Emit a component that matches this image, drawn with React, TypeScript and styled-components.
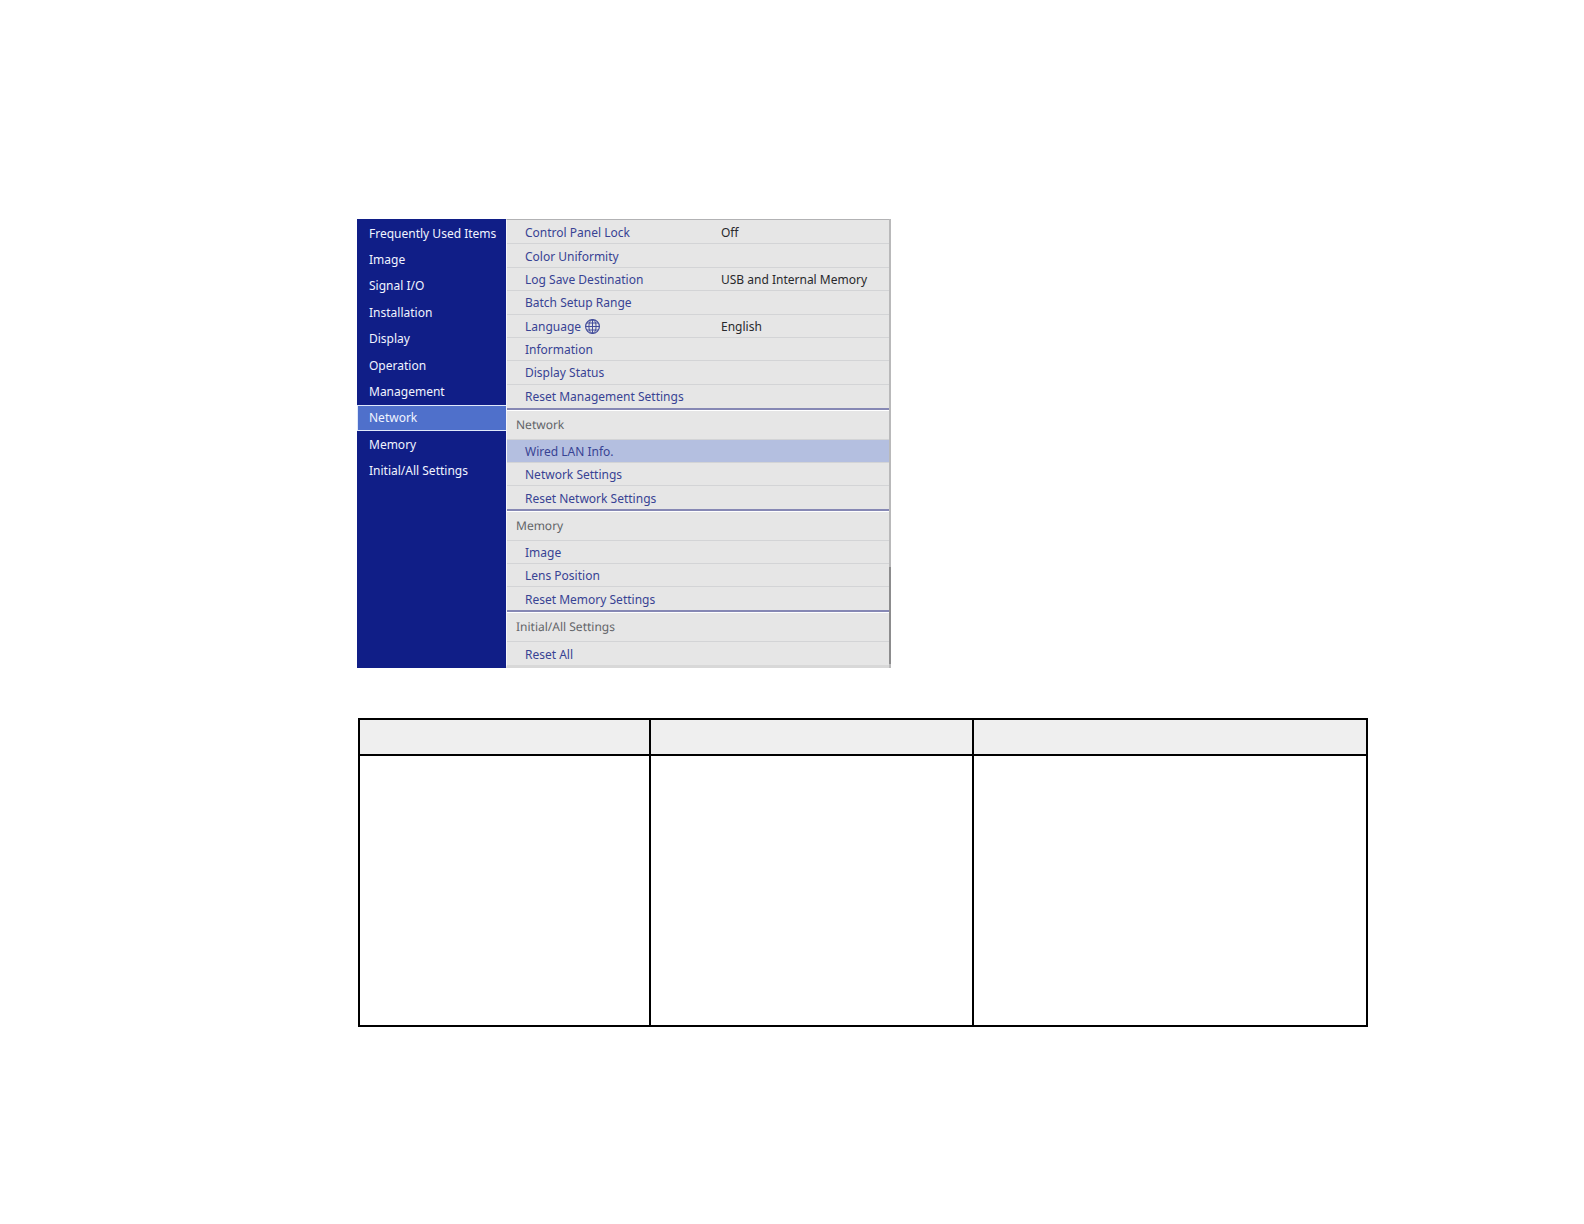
import React, { useState } from 'react';
import styled, { createGlobalStyle } from 'styled-components';

const GlobalStyle = createGlobalStyle`
  * { box-sizing: border-box; }
  body {
    margin: 0;
    background: #ffffff;
    font-family: "Noto Sans", "Open Sans", sans-serif;
    text-rendering: geometricPrecision;
  }
`;

const Page = styled.main`
  display: flex;
  flex-direction: column;
  gap: 50px;
  padding: 219px 216px 197px 357px;
`;

const Menu = styled.section`
  display: grid;
  grid-template-columns: 149px minmax(0, 1fr) 2px;
  width: 100%;
  max-width: 534px;
`;

const Sidebar = styled.nav`
  padding-top: 1px;
  background: #101e87;
`;

const SidebarList = styled.div`
  display: grid;
  grid-auto-rows: 1fr;
  height: 264px;
`;

const SidebarItem = styled.button<{ $active: boolean }>`
  display: flex;
  align-items: center;
  padding: 1px 11px 0;
  border: 1px solid ${(p) => (p.$active ? '#dfe8fb' : 'transparent')};
  background: ${(p) => (p.$active ? '#4f70cb' : 'transparent')};
  color: #f1f4ff;
  font: inherit;
  font-size: 12px;
  line-height: 16px;
  text-align: left;
  white-space: nowrap;
`;

const Settings = styled.div`
  border-top: 1px solid #b2b2b4;
  border-bottom: 3px solid #d8d8d8;
  border-left: 1px solid #f6f6fa;
  background: #e6e6e6;
`;

const Group = styled.section``;

const GroupTitle = styled.h2`
  display: flex;
  align-items: center;
  height: 30px;
  margin: 0;
  padding: 1px 9px 0;
  border-bottom: 1px solid #d3d4d6;
  box-shadow: inset 0 1px #ffffff;
  color: #626468;
  font-size: 12px;
  font-weight: 400;
  line-height: 16px;
`;

const Rows = styled.div<{ $height: number; $first: boolean; $ruled: boolean }>`
  display: grid;
  grid-auto-rows: 1fr;
  height: ${(p) => p.$height}px;
  padding-top: ${(p) => (p.$first ? 1 : 0)}px;
  border-bottom: ${(p) => (p.$ruled ? '2px solid #8688b4' : '0')};
`;

const Row = styled.button<{ $selected: boolean }>`
  display: grid;
  grid-template-columns: 196px 1fr;
  align-items: center;
  padding: 2px 0 0 18px;
  border: 0;
  border-bottom: 1px solid #d3d4d6;
  background: ${(p) => (p.$selected ? '#b4bfe0' : 'transparent')};
  font: inherit;
  font-size: 12px;
  line-height: 16px;
  text-align: left;
  white-space: nowrap;

  &:last-child { border-bottom: 0; }
`;

const Label = styled.span`
  display: flex;
  align-items: center;
  gap: 4px;
  color: #384394;
`;

const Value = styled.span`
  color: #29292c;
`;

const ScrollTrack = styled.div`
  padding-top: 348px;
  background: #b9b9ba;
`;

const ScrollThumb = styled.div`
  height: 97px;
  background: #8c8c8d;
`;

const Table = styled.table`
  width: calc(100% - 1px);
  margin-left: 1px;
  border-collapse: collapse;
  table-layout: fixed;
`;

const Column = styled.col<{ $width: string }>`
  width: ${(p) => p.$width};
`;

const Cell = styled.td<{ $head?: boolean }>`
  height: ${(p) => (p.$head ? 36 : 271)}px;
  padding: 0;
  border: 2px solid #000000;
  background: ${(p) => (p.$head ? '#efefef' : '#ffffff')};
`;

function Globe() {
  return (
    <svg width="15" height="15" viewBox="0 0 15 15" fill="none" stroke="#434d9b" strokeWidth="1" aria-hidden="true">
      <circle cx="7.5" cy="7.5" r="6.9" strokeWidth="1.2" />
      <ellipse cx="7.5" cy="7.5" rx="3.6" ry="6.9" />
      <path d="M7.5 0.6V14.4M0.6 7.5H14.4M1.6 4H13.4M1.6 11H13.4" />
    </svg>
  );
}

type Item = { label: string; value?: string; globe?: boolean };
type ItemGroup = { title?: string; height: number; items: Item[] };

const pages = [
  'Frequently Used Items', 'Image', 'Signal I/O', 'Installation', 'Display',
  'Operation', 'Management', 'Network', 'Memory', 'Initial/All Settings',
];

const groups: ItemGroup[] = [
  {
    height: 190,
    items: [
      { label: 'Control Panel Lock', value: 'Off' },
      { label: 'Color Uniformity' },
      { label: 'Log Save Destination', value: 'USB and Internal Memory' },
      { label: 'Batch Setup Range' },
      { label: 'Language', value: 'English', globe: true },
      { label: 'Information' },
      { label: 'Display Status' },
      { label: 'Reset Management Settings' },
    ],
  },
  {
    title: 'Network',
    height: 71,
    items: [{ label: 'Wired LAN Info.' }, { label: 'Network Settings' }, { label: 'Reset Network Settings' }],
  },
  {
    title: 'Memory',
    height: 71,
    items: [{ label: 'Image' }, { label: 'Lens Position' }, { label: 'Reset Memory Settings' }],
  },
  { title: 'Initial/All Settings', height: 23, items: [{ label: 'Reset All' }] },
];

export default function App() {
  const [page, setPage] = useState('Network');
  const [selected, setSelected] = useState('Wired LAN Info.');

  return (
    <>
      <GlobalStyle />
      <Page>
        <Menu>
          <Sidebar>
            <SidebarList>
              {pages.map((name) => (
                <SidebarItem key={name} type="button" $active={name === page} onClick={() => setPage(name)}>
                  {name}
                </SidebarItem>
              ))}
            </SidebarList>
          </Sidebar>
          <Settings>
            {groups.map((group, i) => (
              <Group key={i}>
                {group.title && <GroupTitle>{group.title}</GroupTitle>}
                <Rows $height={group.height} $first={i === 0} $ruled={i < groups.length - 1}>
                  {group.items.map((item) => (
                    <Row
                      key={item.label}
                      type="button"
                      $selected={item.label === selected}
                      onClick={() => setSelected(item.label)}
                    >
                      <Label>
                        {item.label}
                        {item.globe && <Globe />}
                      </Label>
                      {item.value && <Value>{item.value}</Value>}
                    </Row>
                  ))}
                </Rows>
              </Group>
            ))}
          </Settings>
          <ScrollTrack>
            <ScrollThumb />
          </ScrollTrack>
        </Menu>
        <Table>
          <colgroup>
            <Column $width="291px" />
            <Column $width="323px" />
            <Column $width="auto" />
          </colgroup>
          <thead>
            <tr>
              <Cell $head />
              <Cell $head />
              <Cell $head />
            </tr>
          </thead>
          <tbody>
            <tr>
              <Cell />
              <Cell />
              <Cell />
            </tr>
          </tbody>
        </Table>
      </Page>
    </>
  );
}
